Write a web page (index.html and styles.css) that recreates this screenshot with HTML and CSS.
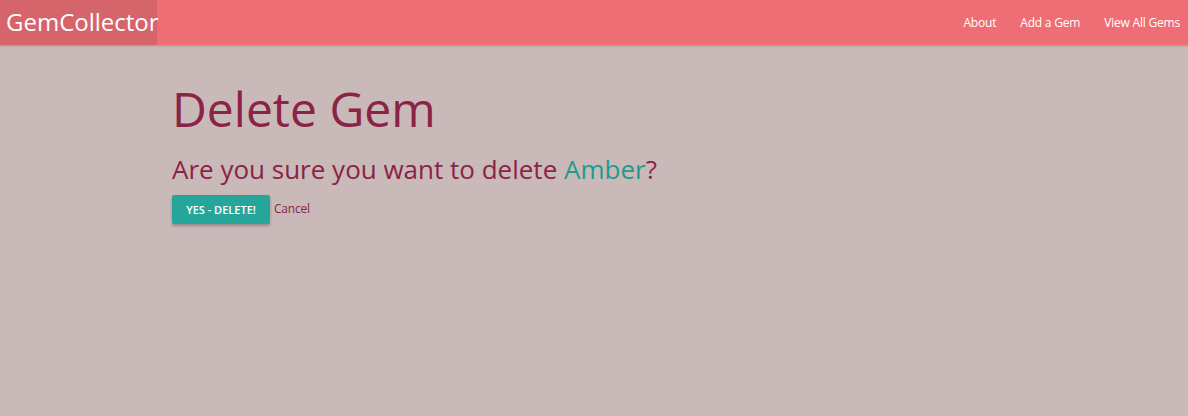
FILE: index.html
```html
<!DOCTYPE html>
<html>
<head>
<meta charset="utf-8">
<link rel="stylesheet" href="styles.css">
</head>
<body>
<nav class="navbar">
  <a class="brand" href="#">GemCollector</a>
  <ul class="nav-links">
    <li><a href="#">About</a></li>
    <li><a href="#">Add a Gem</a></li>
    <li><a href="#">View All Gems</a></li>
  </ul>
</nav>
<main class="container">
  <h1 class="title">Delete Gem</h1>
  <h2 class="question">Are you sure you want to delete <span class="gem-name">Amber</span>?</h2>
  <div class="actions">
    <button class="btn-delete" type="button">Yes - Delete!</button>
    <a class="cancel" href="#">Cancel</a>
  </div>
</main>
</body>
</html>
```
FILE: styles.css
```css
html, body {
  margin: 0;
  padding: 0;
}
body {
  background: #c9b9b9;
  font-family: "Open Sans", "Noto Sans", sans-serif;
  color: #8b2347;
  height: 416px;
}
.navbar {
  display: flex;
  justify-content: space-between;
  align-items: stretch;
  height: 45px;
  background: #ef6d74;
  box-shadow: 0 1px 2px rgba(0,0,0,0.2);
}
.brand {
  display: flex;
  align-items: center;
  background: #d6646b;
  color: #fff;
  text-decoration: none;
  font-size: 24px;
  padding: 0 0 2px 6px;
  width: 151px;
  letter-spacing: 0;
}
.nav-links {
  display: flex;
  list-style: none;
  margin: 0;
  padding: 0;
  align-items: center;
  gap: 0;
}
.nav-links a {
  display: block;
  color: #fff;
  text-decoration: none;
  font-size: 12px;
  padding: 0 12px;
  letter-spacing: -0.2px;
}
.nav-links li:last-child a {
  padding-right: 8px;
}
.container {
  padding-left: 172px;
}
.title {
  font-weight: 400;
  font-size: 48px;
  margin: 34px 0 0 0;
  line-height: 60px;
  letter-spacing: 0;
}
.question {
  font-weight: 400;
  font-size: 26px;
  margin: 12px 0 0 0;
  line-height: 36px;
  letter-spacing: 0;
}
.gem-name {
  color: #1e9b8e;
}
.actions {
  display: flex;
  align-items: flex-start;
  gap: 4px;
  margin-top: 8px;
}
.btn-delete {
  background: #26a69a;
  color: #fff;
  border: none;
  border-radius: 2px;
  font-family: inherit;
  font-weight: 600;
  font-size: 11px;
  text-transform: uppercase;
  height: 29px;
  width: 98px;
  padding: 0;
  box-shadow: 0 2px 3px rgba(0,0,0,0.25);
}
.cancel {
  color: #8b2347;
  text-decoration: none;
  font-size: 12px;
  line-height: 27px;
  letter-spacing: -0.2px;
}
```
